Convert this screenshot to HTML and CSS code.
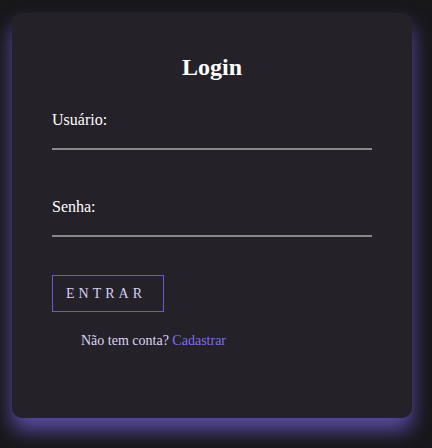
FILE: index.html
```html
<!DOCTYPE html>
<html lang="pt">
<head>
<meta charset="utf-8">
<link rel="stylesheet" href="styles.css">
</head>
<body>
<div class="card">
  <h2 class="title">Login</h2>
  <div class="field">
    <label class="label">Usuário:</label>
    <input class="input" type="text">
  </div>
  <div class="field field-last">
    <label class="label">Senha:</label>
    <input class="input" type="password">
  </div>
  <button class="btn">ENTRAR</button>
  <p class="signup">Não tem conta? <a class="link" href="#">Cadastrar</a></p>
</div>
</body>
</html>
```
FILE: styles.css
```css
html, body {
  margin: 0;
  padding: 0;
  background: #18171a;
  height: 100%;
}
body {
  padding: 13px 20px 0 12px;
  box-sizing: border-box;
  font-family: "Liberation Serif", serif;
}
.card {
  width: 400px;
  height: 405px;
  box-sizing: border-box;
  background: #252128;
  border-radius: 10px;
  padding: 40px 40px;
  box-shadow: 0 12px 20px rgba(106, 90, 205, 0.8);
  color: #fff;
}
.title {
  margin: 0 0 30px;
  text-align: center;
  font-size: 24px;
  font-weight: bold;
  line-height: 28px;
}
.field {
  display: flex;
  flex-direction: column;
  margin-bottom: 48px;
}
.field-last {
  margin-bottom: 38px;
}
.label {
  font-size: 16px;
  line-height: 18px;
  margin-bottom: 11px;
}
.input {
  width: 320px;
  box-sizing: border-box;
  background: transparent;
  border: none;
  border-bottom: 2px solid #8a878d;
  height: 10px;
  padding: 0;
  outline: none;
  color: #fff;
}
.btn {
  display: block;
  margin-top: 2px;
  width: 112px;
  height: 37px;
  background: transparent;
  border: 1px solid #6a5acd;
  color: #d6d0f5;
  font-family: "Liberation Serif", serif;
  font-size: 14px;
  letter-spacing: 4px;
  padding: 0 4px 0 0;
}
.signup {
  margin: 21px 0 0 29px;
  font-size: 14px;
  color: #dcd6f6;
}
.link {
  color: #7d6ff0;
  text-decoration: none;
}
```
